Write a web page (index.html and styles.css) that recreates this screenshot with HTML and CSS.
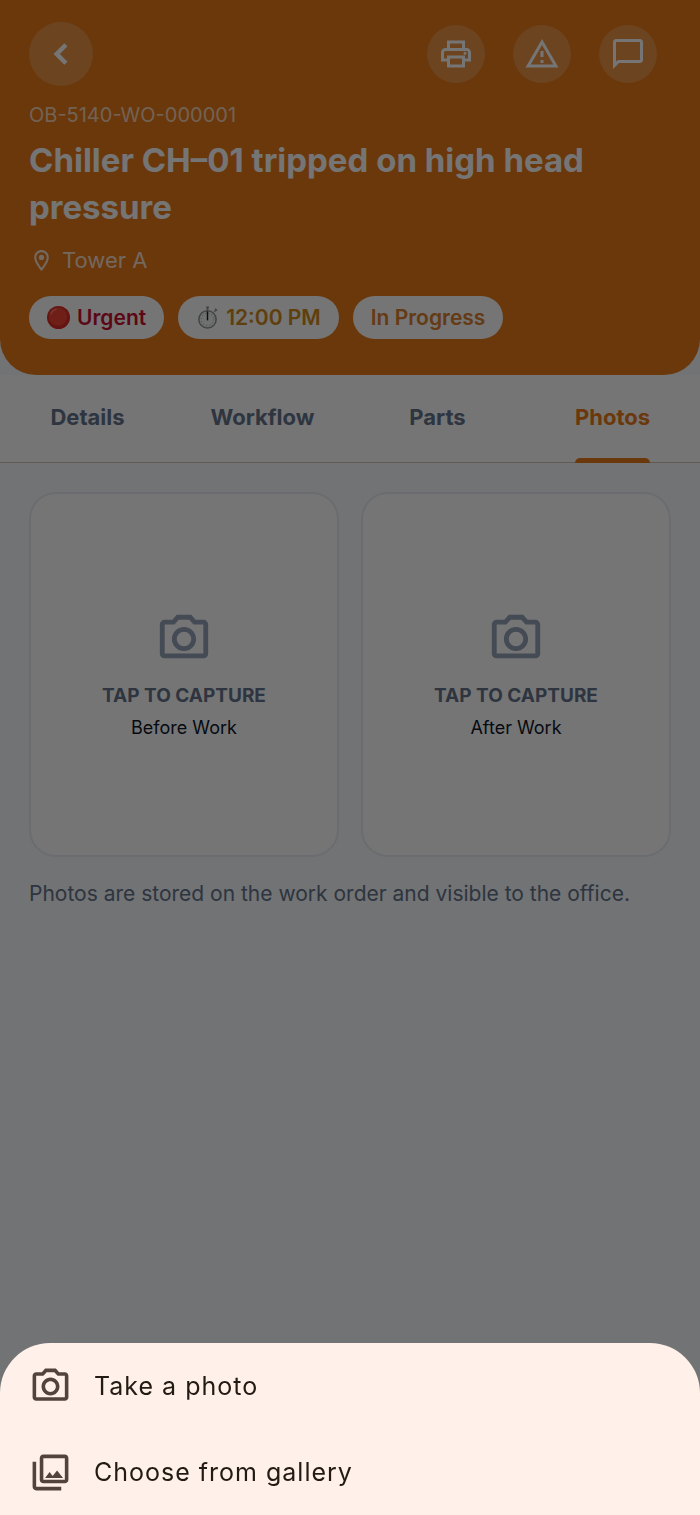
FILE: index.html
```html
<!DOCTYPE html>
<html lang="en">
<head>
<meta charset="utf-8">
<meta name="viewport" content="width=device-width, initial-scale=1">
<title>Work order OB-5140-WO-000001</title>
<link rel="stylesheet" href="styles.css">
</head>
<body>
<div class="page">
  <header class="header">
    <div class="toolbar">
      <button class="round round-back" type="button" aria-label="Back">
        <svg class="icon-back" viewBox="0 0 24 24"><path d="M15.400 7.400 14 6l-6 6 6 6 1.400-1.400L10.800 12z" stroke="currentColor" stroke-width=".7"/></svg>
      </button>
      <div class="actions">
        <button class="round" type="button" aria-label="Print">
          <svg class="icon-action" viewBox="0 0 24 24"><path d="M19 8h-1V3H6v5H5c-1.660 0-3 1.340-3 3v6h4v4h12v-4h4v-6c0-1.660-1.340-3-3-3zM8 5h8v3H8V5zm8 12v2H8v-4h8v2zm2-2v-2H6v2H4v-4c0-.55.45-1 1-1h14c.55 0 1 .45 1 1v4h-2z"/><circle cx="18" cy="11.500" r="1"/></svg>
        </button>
        <button class="round" type="button" aria-label="Report issue">
          <svg class="icon-action" viewBox="0 0 24 24"><path d="M12 5.990 19.530 19H4.470L12 5.990M12 2 1 21h22L12 2zm1 14h-2v2h2v-2zm0-6h-2v4h2v-4z"/></svg>
        </button>
        <button class="round" type="button" aria-label="Comments">
          <svg class="icon-action" viewBox="0 0 24 24"><path d="M20 2H4c-1.100 0-2 .9-2 2v18l4-4h14c1.100 0 2-.9 2-2V4c0-1.100-.9-2-2-2zm0 14H5.200L4 17.200V4h16v12z"/></svg>
        </button>
      </div>
    </div>
    <p class="order-id">OB-5140-WO-000001</p>
    <h1 class="title">Chiller CH–01 tripped on high head pressure</h1>
    <p class="location">
      <svg class="icon-pin" viewBox="0 0 24 24"><path d="M12 2C8.130 2 5 5.130 5 9c0 5.250 7 13 7 13s7-7.750 7-13c0-3.870-3.130-7-7-7zM7 9c0-2.760 2.240-5 5-5s5 2.240 5 5c0 2.880-2.880 7.190-5 9.880C9.920 16.210 7 11.850 7 9z"/><circle cx="12" cy="9" r="2.500"/></svg>
      <span>Tower A</span>
    </p>
    <div class="chips">
      <span class="chip chip-urgent">
        <svg class="icon-chip" viewBox="0 0 24 24"><circle cx="12" cy="12" r="12" fill="#d92f26"/><circle cx="11.500" cy="11" r="9.500" fill="#f44336"/><path d="M4 8c1-2.500 3-4 5.500-4.500" fill="none" stroke="#ff7a70" stroke-width="1.500" stroke-linecap="round"/></svg>
        Urgent
      </span>
      <span class="chip chip-time">
        <svg class="icon-chip" viewBox="0 0 24 24"><g fill="none" stroke="#90979b"><path d="M12 1v4M10.500 1.500h3" stroke-width="1.800"/><path d="m19 6 2-2M20 3l2 2" stroke-width="1.500"/><circle cx="12" cy="14" r="9" fill="#f1f3f4" stroke-width="1.600"/><circle cx="12" cy="14" r="6.500" stroke-dasharray="1 2.400"/></g><path d="M12 15V5.500" stroke="#222" stroke-width="1.500"/></svg>
        12:00 PM
      </span>
      <span class="chip chip-status">In Progress</span>
    </div>
  </header>

  <nav class="tabs" role="tablist">
    <button class="tab" type="button" role="tab"><span class="tab-label">Details</span></button>
    <button class="tab" type="button" role="tab"><span class="tab-label">Workflow</span></button>
    <button class="tab" type="button" role="tab"><span class="tab-label">Parts</span></button>
    <button class="tab tab-active" type="button" role="tab" aria-selected="true"><span class="tab-label">Photos</span></button>
  </nav>

  <main class="content">
    <div class="cards">
      <button class="card" type="button">
        <svg class="icon-camera" viewBox="0 0 24 24"><path d="M14.120 4l1.830 2H20v12H4V6h4.050l1.830-2h4.240M15 2H9L7.170 4H4c-1.100 0-2 .9-2 2v12c0 1.100.9 2 2 2h16c1.100 0 2-.9 2-2V6c0-1.100-.9-2-2-2h-3.170L15 2zm-3 7c1.650 0 3 1.350 3 3s-1.350 3-3 3-3-1.350-3-3 1.350-3 3-3m0-2c-2.760 0-5 2.240-5 5s2.240 5 5 5 5-2.240 5-5-2.240-5-5-5z"/></svg>
        <span class="card-action">TAP TO CAPTURE</span>
        <span class="card-name">Before Work</span>
      </button>
      <button class="card" type="button">
        <svg class="icon-camera" viewBox="0 0 24 24"><path d="M14.120 4l1.830 2H20v12H4V6h4.050l1.830-2h4.240M15 2H9L7.170 4H4c-1.100 0-2 .9-2 2v12c0 1.100.9 2 2 2h16c1.100 0 2-.9 2-2V6c0-1.100-.9-2-2-2h-3.170L15 2zm-3 7c1.650 0 3 1.350 3 3s-1.350 3-3 3-3-1.350-3-3 1.350-3 3-3m0-2c-2.760 0-5 2.240-5 5s2.240 5 5 5 5-2.240 5-5-2.240-5-5-5z"/></svg>
        <span class="card-action">TAP TO CAPTURE</span>
        <span class="card-name">After Work</span>
      </button>
    </div>
    <p class="note">Photos are stored on the work order and visible to the office.</p>
  </main>
</div>

<div class="scrim"></div>

<div class="sheet" role="dialog" aria-label="Add a photo">
  <button class="sheet-item" type="button">
    <svg class="icon-sheet" viewBox="0 0 24 24"><path d="M14.120 4l1.830 2H20v12H4V6h4.050l1.830-2h4.240M15 2H9L7.170 4H4c-1.100 0-2 .9-2 2v12c0 1.100.9 2 2 2h16c1.100 0 2-.9 2-2V6c0-1.100-.9-2-2-2h-3.170L15 2zm-3 7c1.650 0 3 1.350 3 3s-1.350 3-3 3-3-1.350-3-3 1.350-3 3-3m0-2c-2.760 0-5 2.240-5 5s2.240 5 5 5 5-2.240 5-5-2.240-5-5-5z"/></svg>
    <span>Take a photo</span>
  </button>
  <button class="sheet-item" type="button">
    <svg class="icon-sheet" viewBox="0 0 24 24"><path d="M20 4v12H8V4h12m0-2H8c-1.100 0-2 .9-2 2v12c0 1.100.9 2 2 2h12c1.100 0 2-.9 2-2V4c0-1.100-.9-2-2-2zm-8.500 9.670 1.690 2.260 2.480-3.100L19 15H9l2.500-3.330zM2 6v14c0 1.100.9 2 2 2h14v-2H4V6H2z"/></svg>
    <span>Choose from gallery</span>
  </button>
</div>
</body>
</html>
```

FILE: styles.css
```css
* {
  box-sizing: border-box;
}

body {
  margin: 0;
  font-family: Inter, "Liberation Sans", sans-serif;
  background: #f8fafc;
}

button {
  border: 0;
  padding: 0;
  background: none;
  font: inherit;
  color: inherit;
  cursor: pointer;
}

p,
h1 {
  margin: 0;
}

svg {
  display: block;
  flex: none;
  fill: currentColor;
}

.page {
  min-height: 100vh;
}

.header {
  padding: 22px 29px 36px;
  border-radius: 0 0 36px 36px;
  background: #e97a1a;
  color: #fff;
}

.toolbar {
  display: flex;
  align-items: center;
  justify-content: space-between;
}

.actions {
  display: flex;
  gap: 28px;
  padding-right: 14px;
}

.round {
  display: flex;
  align-items: center;
  justify-content: center;
  width: 58px;
  height: 58px;
  border-radius: 50%;
  background: rgba(255, 255, 255, 0.2);
}

.round-back {
  width: 64px;
  height: 64px;
}

.icon-back {
  width: 40px;
  height: 40px;
}

.icon-action {
  width: 36px;
  height: 36px;
}

.order-id {
  margin-top: 16px;
  font-size: 20px;
  line-height: 26px;
  color: rgba(255, 255, 255, 0.7);
}

.title {
  margin-top: 9px;
  font-size: 33px;
  line-height: 47px;
  font-weight: 700;
}

.location {
  display: flex;
  align-items: center;
  gap: 8px;
  margin-top: 15px;
  font-size: 22px;
  line-height: 28px;
  color: rgba(255, 255, 255, 0.8);
}

.icon-pin {
  width: 25px;
  height: 25px;
}

.chips {
  display: flex;
  flex-wrap: wrap;
  gap: 14px;
  margin-top: 22px;
}

.chip {
  display: flex;
  align-items: center;
  gap: 7px;
  height: 43px;
  padding: 0 18px;
  border-radius: 22px;
  background: #fff;
  font-size: 21px;
  font-weight: 600;
}

.icon-chip {
  width: 23px;
  height: 23px;
}

.chip-urgent {
  color: #c8102e;
}

.chip-time {
  color: #d08a1c;
}

.chip-status {
  color: #d9802f;
}

.tabs {
  display: grid;
  grid-template-columns: repeat(4, 1fr);
  height: 88px;
  border-bottom: 1px solid #dcc2ae;
  background: #fff;
}

.tab {
  display: flex;
  justify-content: center;
  font-size: 22px;
  font-weight: 700;
  color: #64748b;
}

.tab-label {
  position: relative;
  height: 88px;
  line-height: 85px;
}

.tab-active {
  color: #e97a1a;
}

.tab-active .tab-label::after {
  content: "";
  position: absolute;
  left: 0;
  right: 0;
  bottom: 0;
  height: 5px;
  border-radius: 5px 5px 0 0;
  background: #e97a1a;
}

.content {
  padding: 29px;
}

.cards {
  display: grid;
  grid-template-columns: 1fr 1fr;
  gap: 22px;
}

.card {
  display: flex;
  flex-direction: column;
  align-items: center;
  justify-content: center;
  aspect-ratio: 310 / 365;
  border: 2px solid #e7ecf1;
  border-radius: 27px;
  background: #fff;
  font-size: 18px;
  line-height: 22px;
}

.icon-camera {
  width: 58px;
  height: 58px;
  margin-bottom: 17px;
  color: #94a3b8;
}

.card-action {
  margin-bottom: 10px;
  font-size: 19px;
  font-weight: 700;
  color: #64748b;
}

.card-name {
  color: #0f172a;
}

.note {
  margin-top: 22px;
  font-size: 21px;
  line-height: 29px;
  color: #64748b;
}

.scrim {
  position: fixed;
  inset: 0;
  background: rgba(0, 0, 0, 0.54);
}

.sheet {
  position: fixed;
  left: 0;
  right: 0;
  bottom: 0;
  display: flex;
  flex-direction: column;
  border-radius: 50px 50px 0 0;
  background: #fff0e9;
  color: #221a15;
}

.sheet-item {
  display: flex;
  align-items: center;
  gap: 22px;
  height: 86px;
  padding: 0 29px;
  font-size: 25px;
  line-height: 36px;
  letter-spacing: 1px;
  text-align: left;
}

.icon-sheet {
  width: 43px;
  height: 43px;
  color: #52443c;
}
```
